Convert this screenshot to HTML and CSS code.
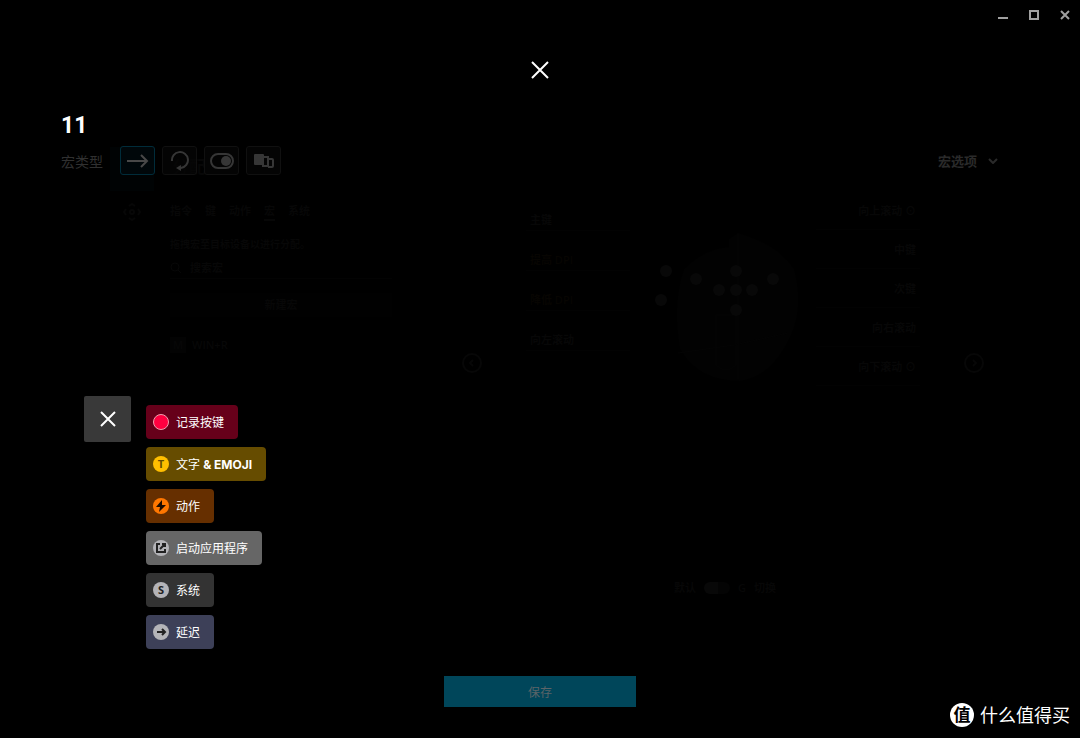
FILE: index.html
```html
<!DOCTYPE html>
<html lang="zh-CN">
<head>
  <meta charset="UTF-8">
  <meta name="viewport" content="width=device-width, initial-scale=1.0">
  <title>宏编辑器</title>
  <link rel="stylesheet" href="styles.css">
</head>
<body>

<!-- assignment page, dimmed behind the editor -->
<div class="backdrop" aria-hidden="true">
  <div class="assign-head">
    <div class="assign-tab">
      <svg width="16" height="16" viewBox="0 0 16 16"><path d="M8 2v12M2 8h12"/></svg>
    </div>
    <span class="assign-title">分配</span>
  </div>
  <div class="assign-body">
    <div class="rail">
      <svg width="18" height="18" viewBox="0 0 18 18"><path d="M6 3l3-2 3 2M6 15l3 2 3-2M3 6L1 9l2 3M15 6l2 3-2 3"/><circle cx="9" cy="9" r="2"/></svg>
    </div>
    <div class="panel">
      <div class="tabs">
        <span>指令</span><span>键</span><span>动作</span><span class="current">宏</span><span>系统</span>
      </div>
      <p class="hint">拖拽宏至目标设备以进行分配。</p>
      <div class="search">
        <svg width="12" height="12" viewBox="0 0 12 12"><circle cx="5" cy="5" r="4"/><path d="M8 8l3 3"/></svg>
        <span>搜索宏</span>
      </div>
      <div class="new-macro">新建宏</div>
      <div class="macro"><span class="macro-icon">M</span><span>WIN+R</span></div>
    </div>
    <div class="stage">
      <svg class="arrow" width="20" height="20" viewBox="0 0 20 20"><circle cx="10" cy="10" r="9"/><path d="M11 7l-3 3 3 3"/></svg>
      <ul class="slots">
        <li>主键</li>
        <li class="dpi">提高 DPI</li>
        <li class="dpi">降低 DPI</li>
        <li>向左滚动</li>
      </ul>
      <svg class="mouse" width="160" height="160" viewBox="0 0 160 160">
        <path class="shell" d="M30 38Q50 18 75 16V8L84 2Q125 14 140 38Q150 75 137 104Q118 146 86 150Q44 150 26 118Q18 72 30 38z"/>
        <path class="seam" d="M84 2v146M62 84h20v50q-10 10-20 0zM24 122l56-8 54-12"/>
        <circle cx="12" cy="40" r="6"/><circle cx="42" cy="48" r="6"/><circle cx="82" cy="40" r="6"/><circle cx="119" cy="48" r="6"/>
        <circle cx="65" cy="59" r="6"/><circle cx="82" cy="59" r="6"/><circle cx="98" cy="59" r="6"/>
        <circle cx="7" cy="69" r="6"/><circle cx="82" cy="79" r="6"/>
      </svg>
      <ul class="slots right">
        <li>向上滚动 ⊙</li>
        <li>中键</li>
        <li>次键</li>
        <li>向右滚动</li>
        <li>向下滚动 ⊙</li>
      </ul>
      <svg class="arrow" width="20" height="20" viewBox="0 0 20 20"><circle cx="10" cy="10" r="9"/><path d="M9 7l3 3-3 3"/></svg>
    </div>
  </div>
  <div class="shift">
    <span>默认</span><span class="shift-switch"></span><span>G</span><span>切换</span>
  </div>
</div>

<div class="editor">
  <header class="titlebar">
    <button type="button" aria-label="最小化"><svg width="10" height="10" viewBox="0 0 10 10"><path d="M0 8h10"/></svg></button>
    <button type="button" aria-label="最大化"><svg width="10" height="10" viewBox="0 0 10 10"><path d="M1 1h8v8H1z"/></svg></button>
    <button type="button" aria-label="关闭窗口"><svg width="10" height="10" viewBox="0 0 10 10"><path d="M1 1l8 8M9 1l-8 8"/></svg></button>
  </header>

  <button type="button" class="close" aria-label="关闭">
    <svg width="18" height="18" viewBox="0 0 18 18"><path d="M1 1l16 16M17 1L1 17"/></svg>
  </button>

  <h1>11</h1>

  <div class="toolbar">
    <span class="toolbar-label">宏类型</span>
    <div class="types">
      <button type="button" class="type selected" aria-label="不重复">
        <svg width="24" height="20" viewBox="0 0 24 20"><path d="M1 10h20M15 4l6 6-6 6"/></svg>
      </button>
      <button type="button" class="type" aria-label="按住时重复">
        <svg width="24" height="20" viewBox="0 0 24 20"><path d="M4 10A8 8 0 1 1 13 17"/><path class="fill" d="M8 17l5-3v6z"/></svg>
      </button>
      <button type="button" class="type" aria-label="切换">
        <svg width="24" height="20" viewBox="0 0 24 20"><rect x="1" y="3" width="22" height="14" rx="7"/><circle class="fill" cx="16" cy="10" r="5"/></svg>
      </button>
      <button type="button" class="type" aria-label="序列">
        <svg width="24" height="20" viewBox="0 0 24 20"><rect class="fill" x="2" y="3" width="10" height="11" rx="1"/><path d="M12 6h4v9h-5v-2M16 8h4q1 0 1 1v6q0 1-1 1h-4"/></svg>
      </button>
    </div>
    <label class="options">
      <select aria-label="宏选项"><option>宏选项</option></select>
      <svg width="10" height="6" viewBox="0 0 10 6"><path d="M1 1l4 4 4-4"/></svg>
    </label>
  </div>

  <main class="workspace">
    <button type="button" class="toggle" aria-label="收起菜单">
      <svg width="16" height="16" viewBox="0 0 16 16"><path d="M1 1l14 14M15 1L1 15"/></svg>
    </button>
    <div class="actions">
      <button type="button" class="action record"><span class="badge"></span>记录按键</button>
      <button type="button" class="action text"><span class="badge">T</span><span>文字 <b>&amp; EMOJI</b></span></button>
      <button type="button" class="action move">
        <span class="badge"><svg width="16" height="16" viewBox="0 0 16 16"><path class="fill" d="M9 2L3 9h4l-1 5 7-7H9z"/></svg></span>动作
      </button>
      <button type="button" class="action launch">
        <span class="badge"><svg width="16" height="16" viewBox="0 0 16 16"><path d="M7 4H4v8h8V9M7 9l5-5M9 4h3v3"/></svg></span>启动应用程序
      </button>
      <button type="button" class="action system"><span class="badge">S</span>系统</button>
      <button type="button" class="action delay">
        <span class="badge"><svg width="16" height="16" viewBox="0 0 16 16"><path d="M4 8h8M9 5l3 3-3 3"/></svg></span>延迟
      </button>
    </div>
  </main>

  <button type="button" class="save" disabled>保存</button>
</div>

<div class="brand"><span class="brand-logo">值</span><span>什么值得买</span></div>

</body>
</html>
```

FILE: styles.css
```css
* {
  box-sizing: border-box;
}

body {
  position: relative;
  margin: 0;
  min-height: 100vh;
  background: #000;
  color: #fff;
  font-family: "Open Sans", "Noto Sans CJK SC", sans-serif;
  font-size: 12px;
}

button,
select {
  margin: 0;
  padding: 0;
  border: 0;
  background: none;
  color: inherit;
  font: inherit;
}

svg {
  display: block;
  fill: none;
  stroke: currentColor;
}

.fill {
  fill: currentColor;
  stroke: none;
}

/* dimmed page */
.backdrop {
  position: absolute;
  inset: 0;
  display: flex;
  flex-direction: column;
  padding: 147px 96px 142px 110px;
  color: #070707;
  font-size: 11px;
  font-weight: 600;
  line-height: 16px;
}

.assign-head {
  display: flex;
  align-items: flex-start;
  gap: 18px;
  height: 44px;
}

.assign-tab {
  display: grid;
  place-items: center;
  width: 44px;
  height: 44px;
  background: #000304;
}

.assign-title {
  padding-top: 12px;
  font-size: 17px;
}

.assign-body {
  display: grid;
  grid-template-columns: 44px 222px 1fr;
  gap: 16px;
  flex: 1;
}

.rail {
  display: flex;
  justify-content: center;
  padding-top: 12px;
}

.rail svg {
  stroke-width: 2;
}

.tabs {
  display: flex;
  gap: 13px;
  padding-top: 12px;
}

.current {
  border-bottom: 2px solid #070707;
}

.hint {
  margin: 15px 0 8px;
  font-size: 10px;
}

.search {
  display: flex;
  align-items: center;
  gap: 8px;
  padding-bottom: 2px;
  border-bottom: 1px solid #030303;
}

.new-macro {
  margin: 14px 0 20px;
  padding: 4px;
  background: #010101;
  text-align: center;
}

.macro {
  display: flex;
  align-items: center;
  gap: 6px;
}

.macro-icon {
  width: 16px;
  background: #030303;
  text-align: center;
}

.stage {
  display: flex;
  align-items: flex-start;
  gap: 44px;
  padding-left: 54px;
}

.arrow {
  flex: none;
  margin-top: 162px;
  stroke-width: 2;
}

.slots {
  flex: none;
  width: 104px;
  margin: 0;
  padding: 0;
  list-style: none;
}

.slots li {
  height: 40px;
  padding: 21px 4px 0;
  border-bottom: 1px solid #020202;
}

.slots .dpi {
  color: #070502;
}

.slots.right {
  text-align: right;
}

.slots.right li {
  height: 39px;
  padding-top: 12px;
}

.mouse {
  flex: none;
  margin: 40px -42px 0 -20px;
  fill: #080808;
  stroke: none;
}

.shell {
  fill: #020202;
}

.seam {
  fill: none;
  stroke: #040404;
}

.shift {
  display: flex;
  align-items: center;
  align-self: center;
  gap: 8px;
  margin-left: 356px;
}

.shift-switch {
  width: 26px;
  height: 12px;
  border-left: 14px solid #080808;
  border-radius: 6px;
  background: #040404;
}

/* macro editor */
.editor {
  position: relative;
  display: flex;
  flex-direction: column;
  min-height: 100vh;
}

.titlebar {
  display: flex;
  justify-content: flex-end;
  gap: 11px;
  padding: 5px 5px 5px 0;
  color: #a0a0a0;
}

.titlebar button {
  padding: 5px;
}

.titlebar svg {
  stroke-width: 2;
}

.close {
  align-self: center;
  margin-top: 24px;
  padding: 7px;
}

.close svg,
.toggle svg {
  stroke-width: 2;
}

h1 {
  margin: 24px 0 4px;
  padding-left: 61px;
  font-family: "Liberation Sans Narrow", Roboto, sans-serif;
  font-size: 23px;
  font-weight: 700;
  line-height: 32px;
}

.toolbar {
  display: flex;
  align-items: center;
  padding: 0 82px 0 61px;
}

.toolbar-label {
  color: #303030;
  font-size: 14px;
}

.types {
  display: flex;
  gap: 7px;
  margin-left: 17px;
}

.type {
  display: grid;
  place-items: center;
  width: 35px;
  height: 29px;
  border: 1px solid #101010;
  border-radius: 3px;
  background: rgba(5, 5, 5, 0.7);
  color: #363636;
}

.type svg {
  stroke-width: 2;
}

.type.selected {
  border-color: #002c3a;
  background: #00070a;
  color: #484848;
}

.options {
  display: flex;
  align-items: center;
  gap: 10px;
  margin-left: auto;
  color: #2a2a2a;
  font-size: 13px;
  font-weight: 700;
}

.options select {
  appearance: none;
}

.options svg {
  stroke-width: 2;
}

.workspace {
  display: flex;
  flex: 1;
  align-items: flex-end;
  gap: 15px;
  padding: 24px 84px 27px;
}

.toggle {
  display: grid;
  place-items: center;
  width: 47px;
  height: 46px;
  margin-bottom: 207px;
  border-radius: 2px;
  background: #393939;
}

.actions {
  display: flex;
  flex-direction: column;
  align-items: flex-start;
  gap: 8px;
}

.action {
  display: flex;
  align-items: center;
  gap: 7px;
  height: 34px;
  padding: 0 14px 0 7px;
  border-radius: 4px;
}

.action b {
  font-family: Inter, sans-serif;
}

.badge {
  display: grid;
  place-items: center;
  width: 16px;
  height: 16px;
  border-radius: 50%;
  background: #b4b4b8;
  color: #222;
  font-size: 11px;
  font-weight: 700;
  line-height: 16px;
}

.badge svg {
  stroke-width: 2;
}

.record {
  background: #66001a;
}

.record .badge {
  border: 1px solid #f0a0b0;
  background: #ff0040;
}

.text {
  background: #664c00;
}

.text .badge {
  background: #ffbf00;
  color: #664c00;
}

.move {
  background: #662f00;
}

.move .badge {
  background: #ff7700;
  color: #1c0c00;
}

.launch {
  background: #666;
}

.system {
  background: #333;
}

.delay {
  background: #3d4058;
}

.save {
  align-self: center;
  width: 192px;
  height: 31px;
  margin-bottom: 31px;
  background: #00465a;
  color: #5c6468;
}

/* site mark over the bottom corner */
.brand {
  position: absolute;
  right: 10px;
  bottom: 10px;
  display: flex;
  align-items: center;
  gap: 6px;
  font-size: 18px;
  line-height: 26px;
}

.brand-logo {
  width: 24px;
  height: 24px;
  border-radius: 50%;
  background: #fff;
  color: #000;
  font-size: 17px;
  font-weight: 700;
  line-height: 23px;
  text-align: center;
}
```
